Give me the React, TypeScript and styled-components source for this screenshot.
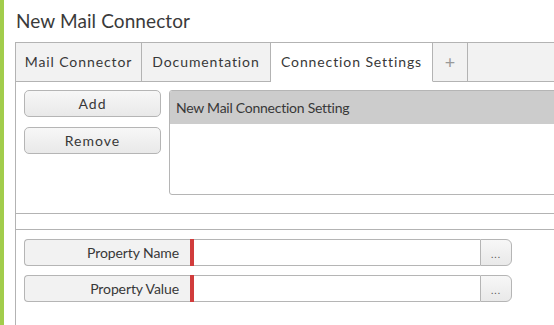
import React from "react";
import styled, { createGlobalStyle } from "styled-components";

const Global = createGlobalStyle`
  html, body { margin: 0; padding: 0; background: #fff; overflow: hidden; }
  body { font-family: "Lato", "Open Sans", sans-serif; color: #333; }
`;

const Page = styled.div`
  display: flex;
  width: 554px;
  height: 325px;
  overflow: hidden;
`;

const GreenBar = styled.div`
  width: 4px;
  flex: none;
  background: #a2cd4c;
`;

const Main = styled.div`
  flex: none;
  width: 620px;
  padding-left: 11px;
  display: flex;
  flex-direction: column;
`;

const Title = styled.h1`
  margin: 0;
  height: 42px;
  padding: 8px 0 0 1px;
  box-sizing: border-box;
  font-size: 19px;
  font-weight: 400;
  letter-spacing: 0.1px;
  line-height: 26px;
  color: #3a3a3a;
`;

const Panel = styled.div`
  flex: 1;
  border-left: 1px solid #b3b3b3;
  border-top: 1px solid #b3b3b3;
  display: flex;
  flex-direction: column;
`;

const TabBar = styled.div`
  display: flex;
  height: 39px;
`;

const Tab = styled.div<{ $active?: boolean; $w: number }>`
  width: ${(p) => p.$w}px;
  flex: none;
  box-sizing: border-box;
  border-right: 1px solid #b3b3b3;
  border-bottom: 1px solid ${(p) => (p.$active ? "#fff" : "#b3b3b3")};
  background: ${(p) => (p.$active ? "#fff" : "#f2f2f2")};
  display: flex;
  align-items: center;
  justify-content: center;
  font-size: 14px;
  letter-spacing: 0.9px;
  color: #383838;
  padding-bottom: 1px;
`;

const PlusTab = styled(Tab)`
  color: #999;
  font-size: 18px;
  letter-spacing: 0;
`;

const TabFiller = styled.div`
  flex: 1;
  background: #f2f2f2;
  border-bottom: 1px solid #b3b3b3;
`;

const TopSection = styled.div`
  display: flex;
  gap: 8px;
  padding: 8px 0 0 8px;
  height: 132px;
  box-sizing: border-box;
  border-bottom: 1px solid #b3b3b3;
`;

const ButtonColumn = styled.div`
  display: flex;
  flex-direction: column;
  gap: 10px;
  width: 137px;
  flex: none;
`;

const Button = styled.button`
  height: 27px;
  border: 1px solid #b5b5b5;
  border-radius: 5px;
  background: linear-gradient(#f7f7f7, #e9e9e9);
  font-family: inherit;
  font-size: 14px;
  letter-spacing: 1px;
  color: #383838;
  padding: 0 0 1px;
`;

const ListBox = styled.div`
  width: 420px;
  height: 105px;
  box-sizing: border-box;
  border: 1px solid #b5b5b5;
  border-radius: 3px;
  overflow: hidden;
`;

const ListRow = styled.div<{ $selected?: boolean }>`
  height: 33px;
  background: ${(p) => (p.$selected ? "#cccccc" : "#fff")};
  display: flex;
  align-items: center;
  padding-left: 6px;
  font-size: 14px;
  letter-spacing: -0.25px;
  color: #383838;
`;

const Spacer = styled.div`
  height: 15px;
  border-bottom: 1px solid #b3b3b3;
`;

const Properties = styled.div`
  display: flex;
  flex-direction: column;
  gap: 9px;
  padding: 9px 0 0 8px;
`;

const PropRow = styled.div`
  display: flex;
  height: 27px;
`;

const PropLabel = styled.div`
  width: 166px;
  box-sizing: border-box;
  border: 1px solid #b5b5b5;
  border-right: none;
  border-radius: 4px 0 0 4px;
  background: #f2f2f2;
  display: flex;
  align-items: center;
  justify-content: flex-end;
  padding: 0 11px 1px 0;
  font-size: 14px;
  letter-spacing: -0.1px;
  color: #383838;
`;

const Required = styled.div`
  width: 4px;
  background: #d13c3c;
`;

const PropInput = styled.div`
  width: 286px;
  box-sizing: border-box;
  border-top: 1px solid #b5b5b5;
  border-bottom: 1px solid #b5b5b5;
  background: #fff;
`;

const DotsButton = styled.div`
  width: 32px;
  box-sizing: border-box;
  border: 1px solid #b5b5b5;
  border-radius: 0 6px 6px 0;
  background: linear-gradient(#f7f7f7, #e9e9e9);
  display: flex;
  align-items: center;
  justify-content: center;
  font-size: 10px;
  letter-spacing: 1px;
  color: #555;
  padding-top: 3px;
`;

export default function App() {
  return (
    <>
      <Global />
      <Page>
        <GreenBar />
        <Main>
          <Title>New Mail Connector</Title>
          <Panel>
            <TabBar>
              <Tab $w={126}>Mail Connector</Tab>
              <Tab $w={129}>Documentation</Tab>
              <Tab $w={162} $active>Connection Settings</Tab>
              <PlusTab $w={35}>+</PlusTab>
              <TabFiller />
            </TabBar>
            <TopSection>
              <ButtonColumn>
                <Button>Add</Button>
                <Button>Remove</Button>
              </ButtonColumn>
              <ListBox>
                <ListRow $selected>New Mail Connection Setting</ListRow>
              </ListBox>
            </TopSection>
            <Spacer />
            <Properties>
              <PropRow>
                <PropLabel>Property Name</PropLabel>
                <Required />
                <PropInput />
                <DotsButton>...</DotsButton>
              </PropRow>
              <PropRow>
                <PropLabel>Property Value</PropLabel>
                <Required />
                <PropInput />
                <DotsButton>...</DotsButton>
              </PropRow>
            </Properties>
          </Panel>
        </Main>
      </Page>
    </>
  );
}
